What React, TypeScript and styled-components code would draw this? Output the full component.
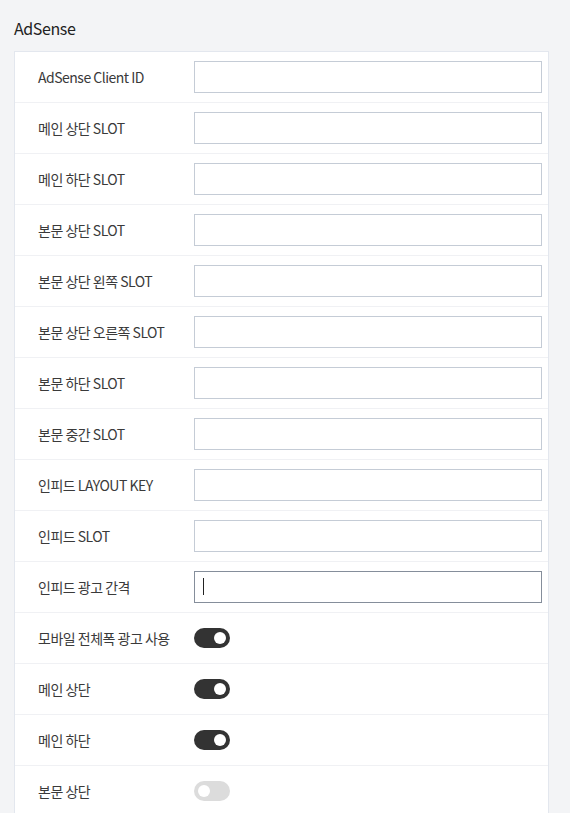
import styled, { createGlobalStyle } from 'styled-components';

const GlobalStyle = createGlobalStyle`
  html, body {
    margin: 0;
    background: #f3f4f6;
  }
  body {
    font-family: "Noto Sans CJK KR", "Noto Sans", sans-serif;
    color: #333;
  }
`;

type Field =
  | { label: string; type: 'text'; focus?: boolean }
  | { label: string; type: 'toggle'; on: boolean };

const fields: Field[] = [
  { label: 'AdSense Client ID', type: 'text' },
  { label: '메인 상단 SLOT', type: 'text' },
  { label: '메인 하단 SLOT', type: 'text' },
  { label: '본문 상단 SLOT', type: 'text' },
  { label: '본문 상단 왼쪽 SLOT', type: 'text' },
  { label: '본문 상단 오른쪽 SLOT', type: 'text' },
  { label: '본문 하단 SLOT', type: 'text' },
  { label: '본문 중간 SLOT', type: 'text' },
  { label: '인피드 LAYOUT KEY', type: 'text' },
  { label: '인피드 SLOT', type: 'text' },
  { label: '인피드 광고 간격', type: 'text', focus: true },
  { label: '모바일 전체폭 광고 사용', type: 'toggle', on: true },
  { label: '메인 상단', type: 'toggle', on: true },
  { label: '메인 하단', type: 'toggle', on: true },
  { label: '본문 상단', type: 'toggle', on: false },
];

const App: React.FC = () => {
  return (
    <>
      <GlobalStyle />
      <Page>
        <Title>AdSense</Title>
        <Card>
          {fields.map((f) => (
            <Row key={f.label}>
              <Label>{f.label}</Label>
              <Control>
                {f.type === 'text' ? (
                  <InputWrap>
                    <Input type="text" $focused={!!f.focus} />
                    {f.focus && <Caret />}
                  </InputWrap>
                ) : (
                  <Toggle $on={f.on} />
                )}
              </Control>
            </Row>
          ))}
        </Card>
      </Page>
    </>
  );
};

const Page = styled.div`
  padding: 16px 21px 0 14px;
`;

const Title = styled.h2`
  margin: 0 0 11px;
  font-size: 16px;
  line-height: 24px;
  font-weight: 400;
  letter-spacing: -0.4px;
  color: #222;
`;

const Card = styled.div`
  background: #fff;
  border: 1px solid #e3e7ee;
  border-bottom: none;
`;

const Row = styled.div`
  display: flex;
  align-items: center;
  height: 50px;
  border-bottom: 1px solid #f0f1f4;
`;

const Label = styled.div`
  width: 156px;
  padding-left: 23px;
  font-size: 14px;
  letter-spacing: -0.5px;
  color: #3a3a3a;
`;

const Control = styled.div`
  flex: 1;
  display: flex;
  align-items: center;
  padding-right: 6px;
`;

const InputWrap = styled.div`
  position: relative;
  flex: 1;
  display: flex;
`;

const Input = styled.input<{ $focused: boolean }>`
  box-sizing: border-box;
  width: 100%;
  height: 32px;
  border: 1px solid ${(p) => (p.$focused ? '#858e9b' : '#c5ccd6')};
  border-radius: 0;
  padding: 0 8px;
  font-size: 14px;
  font-family: inherit;
  color: #333;
  background: #fff;
  outline: none;
`;

const Caret = styled.span`
  position: absolute;
  left: 9px;
  top: 7px;
  width: 1px;
  height: 17px;
  background: #222;
`;

const Toggle = styled.span<{ $on: boolean }>`
  position: relative;
  display: inline-block;
  width: 36px;
  height: 20px;
  border-radius: 10px;
  background: ${(p) => (p.$on ? '#333' : '#dcdcdc')};

  &::after {
    content: '';
    position: absolute;
    top: 4px;
    left: ${(p) => (p.$on ? '20px' : '4px')};
    width: 12px;
    height: 12px;
    border-radius: 50%;
    background: #fff;
  }
`;

export default App;
